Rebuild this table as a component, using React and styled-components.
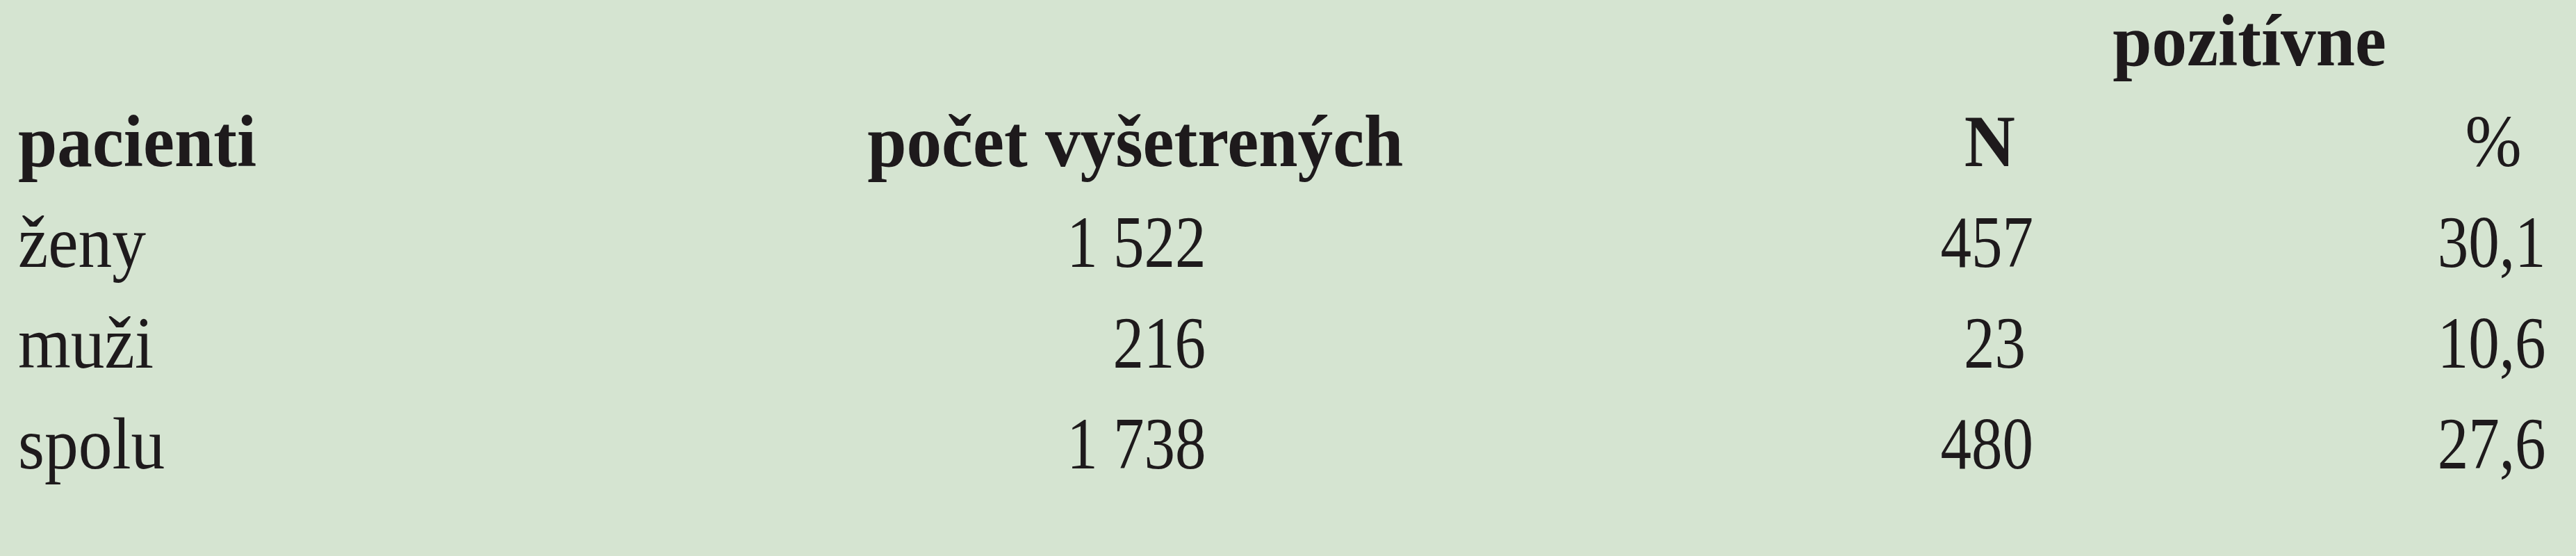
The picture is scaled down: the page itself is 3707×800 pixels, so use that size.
import React from 'react'
import styled, { createGlobalStyle } from 'styled-components'

const GlobalStyle = createGlobalStyle`
  html, body {
    margin: 0;
    padding: 0;
    background: #d5e4d1;
  }
  body {
    min-height: 800px;
  }
`

const StyledTable = styled.div`
  display: grid;
  grid-template-columns: 1230px 800px 737px 192px 510px 238px;
  grid-auto-rows: 145px;
  width: 3707px;
  height: 800px;
  font-family: 'Liberation Serif', 'Times New Roman', serif;
  font-size: 106px;
  line-height: 118px;
  color: #1e1a1c;
`

const StyledCell = styled.div`
  grid-column: ${(p) => p.$col} / span ${(p) => p.$span || 1};
  text-align: ${(p) => p.$align || 'left'};
  font-weight: ${(p) => (p.$bold ? 700 : 400)};
  padding-left: ${(p) => p.$padLeft || 0}px;
  padding-right: ${(p) => p.$padRight || 0}px;
  white-space: nowrap;
`

const origins = { left: 'left', right: 'right', center: 'center' }

const StyledInk = styled.span`
  display: inline-block;
  transform: scaleX(${(p) => p.$sx});
  transform-origin: ${(p) => origins[p.$align || 'left']} center;
`

const Cell = ({ col, span, align, bold, padLeft, padRight, sx, children }) => (
  <StyledCell
    $col={col}
    $span={span}
    $align={align}
    $bold={bold}
    $padLeft={padLeft}
    $padRight={padRight}
  >
    <StyledInk $sx={sx} $align={align}>
      {children}
    </StyledInk>
  </StyledCell>
)

const rows = [
  { label: 'ženy', total: '1 522', n: '457', pct: '30,1' },
  { label: 'muži', total: '216', n: '23', pct: '10,6' },
  { label: 'spolu', total: '1 738', n: '480', pct: '27,6' },
]

const HEAD = 0.955
const WORD = 0.92
const DIGIT = 0.84

const App = () => {
  return (
    <>
      <GlobalStyle />
      <StyledTable>
        <Cell col={4} span={3} align="center" bold sx={HEAD}>
          pozitívne
        </Cell>

        <Cell col={1} bold padLeft={26} sx={HEAD}>
          pacienti
        </Cell>
        <Cell col={2} align="center" bold sx={HEAD}>
          počet vyšetrených
        </Cell>
        <Cell col={4} align="center" bold sx={HEAD}>
          N
        </Cell>
        <Cell col={6} align="center" sx={WORD}>
          %
        </Cell>

        {rows.map((r) => (
          <React.Fragment key={r.label}>
            <Cell col={1} padLeft={26} sx={WORD}>
              {r.label}
            </Cell>
            <Cell col={2} align="right" padRight={295} sx={DIGIT}>
              {r.total}
            </Cell>
            <Cell col={4} align="right" padRight={44} sx={DIGIT}>
              {r.n}
            </Cell>
            <Cell col={6} align="right" padRight={44} sx={DIGIT}>
              {r.pct}
            </Cell>
          </React.Fragment>
        ))}
      </StyledTable>
    </>
  )
}

export default App
